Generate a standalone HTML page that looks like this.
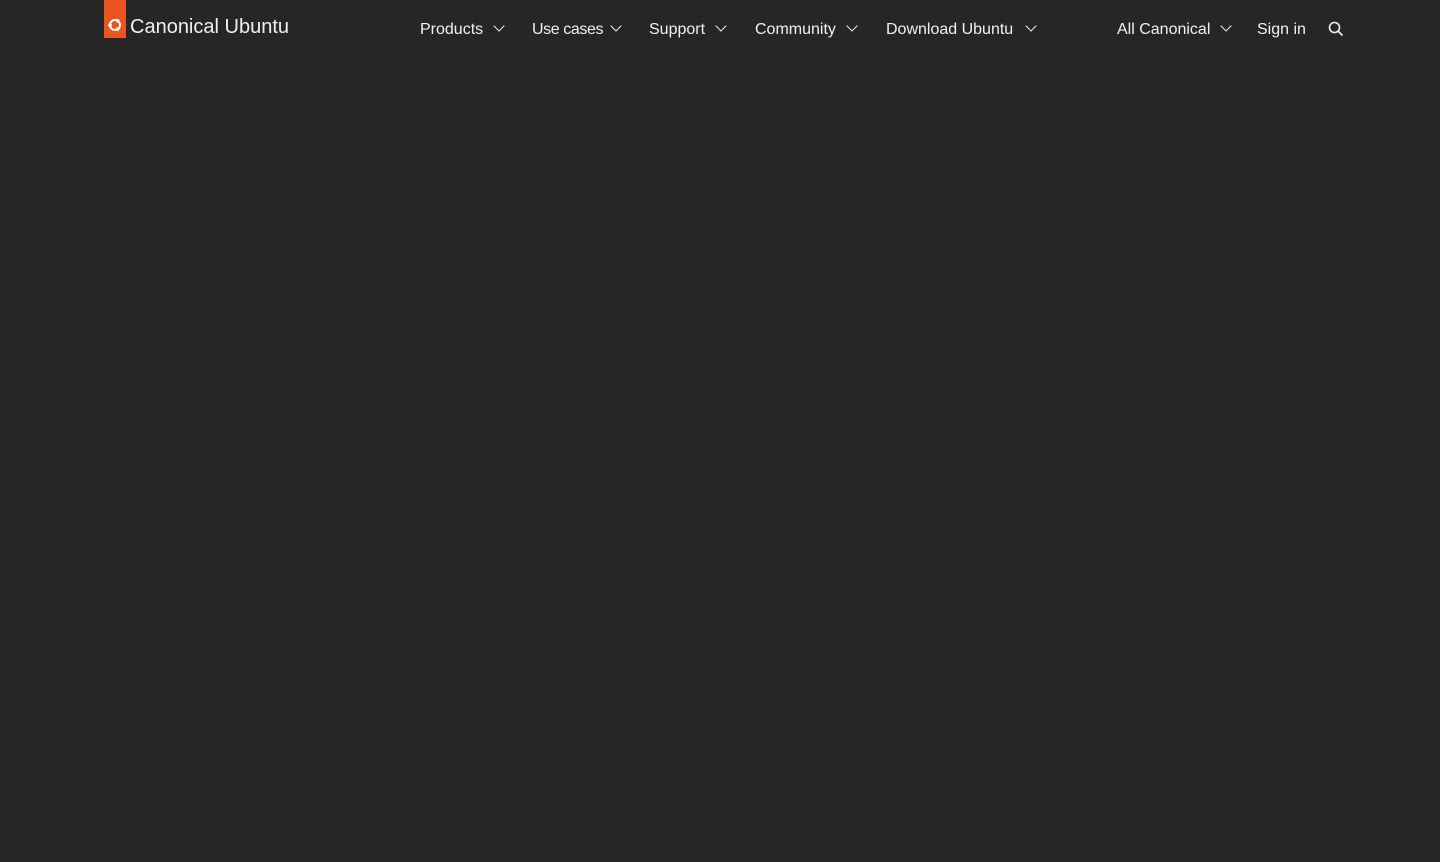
<!DOCTYPE html>
<html><head><style>
body{margin:0;width:1440px;height:862px;background:#262626;font-family:"Liberation Sans",sans-serif;color:#fff;overflow:hidden;position:relative}
.tag{position:absolute;left:104px;top:0;width:22px;height:38px;background:#e95420}
.brand{position:absolute;left:130px;top:16px;font-size:20px;color:#f0f0f0}
.n{position:absolute;top:21px;font-size:16px;color:#f0f0f0;white-space:nowrap}
.ch{display:inline-block;width:7px;height:7px;border-right:1.5px solid #f0f0f0;border-bottom:1.5px solid #f0f0f0;transform:rotate(45deg);margin-left:12px;position:relative;top:-4px}
</style></head><body>
<div class="tag"><svg width="22" height="38" viewBox="0 0 22 38"><circle cx="11" cy="25" r="5" fill="none" stroke="#fff" stroke-width="2"/><circle cx="6" cy="25" r="1.8" fill="#fff"/><circle cx="13.5" cy="20.7" r="1.8" fill="#fff"/><circle cx="13.5" cy="29.3" r="1.8" fill="#fff"/></svg></div>
<div class="brand">Canonical Ubuntu</div>
<div class="n" style="left:420px">Products<span class="ch"></span></div>
<div class="n" style="left:532px;letter-spacing:-0.4px">Use cases<span class="ch" style="margin-left:9px"></span></div>
<div class="n" style="left:649px">Support<span class="ch"></span></div>
<div class="n" style="left:755px">Community<span class="ch"></span></div>
<div class="n" style="left:886px">Download Ubuntu<span class="ch" style="margin-left:14px"></span></div>
<div class="n" style="left:1117px">All Canonical<span class="ch"></span></div>
<div class="n" style="left:1257px">Sign in</div>
<svg style="position:absolute;left:1328px;top:21px" width="16" height="16" viewBox="0 0 16 16"><circle cx="6.5" cy="6.5" r="5" fill="none" stroke="#f0f0f0" stroke-width="1.6"/><line x1="10.2" y1="10.2" x2="14.5" y2="14.5" stroke="#f0f0f0" stroke-width="1.6"/></svg>
</body></html>
